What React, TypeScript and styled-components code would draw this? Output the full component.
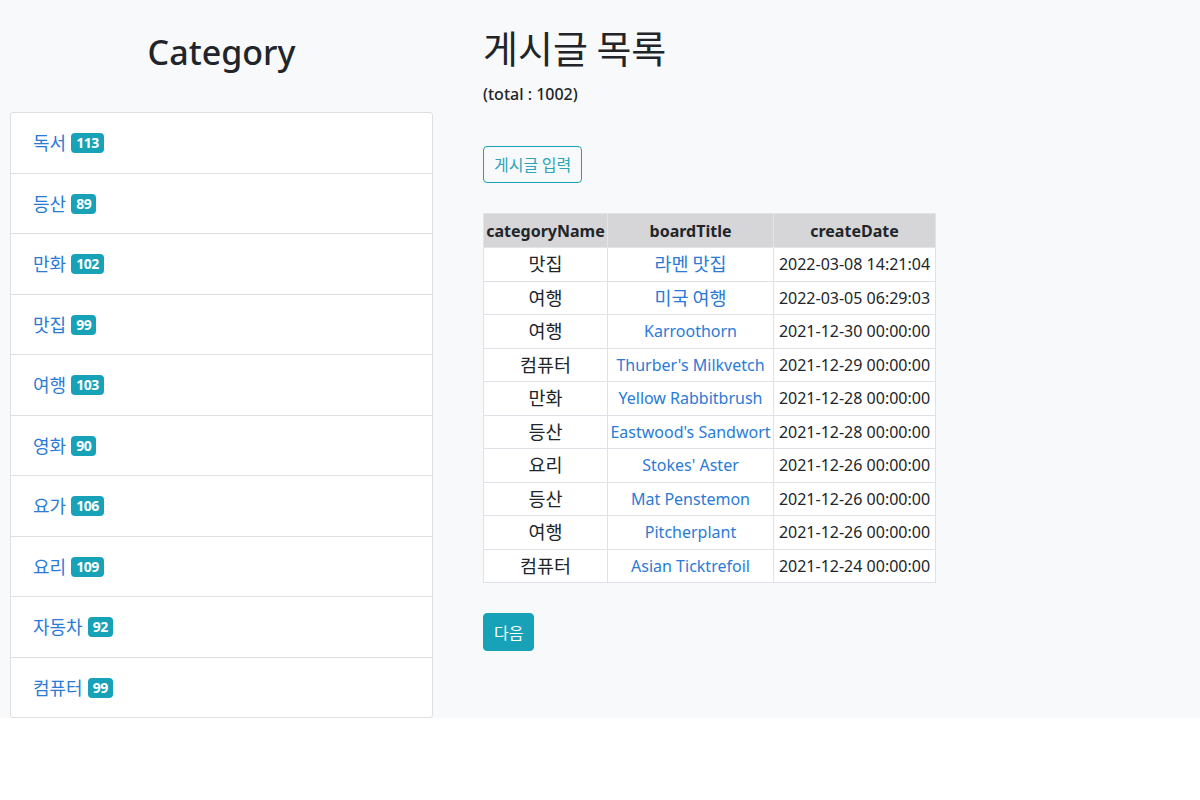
import React from "react";
import styled, { createGlobalStyle } from "styled-components";

const Global = createGlobalStyle`
  html, body { margin: 0; padding: 0; background: #ffffff; }
  body { font-family: "Noto Sans", "Noto Sans CJK KR", sans-serif; color: #212529; }
  * { box-sizing: border-box; }
`;

const Page = styled.div`
  background: #f8f9fa;
  display: flex;
  align-items: flex-start;
`;

const Side = styled.aside`
  width: 443px;
  padding: 0 10px;
  display: flex;
  flex-direction: column;
`;

const SideTitle = styled.h1`
  margin: 29px 0 37px;
  text-align: center;
  font-size: 34px;
  line-height: 46px;
  font-weight: 500;
  color: #212529;
`;

const List = styled.ul`
  list-style: none;
  margin: 0;
  padding: 0;
  background: #fff;
  border: 1px solid #dfdfdf;
  border-radius: 3px;
`;

const Item = styled.li`
  padding: 12px 22px;
  line-height: 35.5px;
  font-size: 18px;
  font-family: "Noto Sans CJK KR", "Noto Sans", sans-serif;
  & + & { border-top: 1px solid #dfdfdf; }
`;

const CatLink = styled.a`
  color: #2a7bd6;
  text-decoration: none;
`;

const Badge = styled.span`
  display: inline-block;
  margin-left: 5px;
  padding: 2px 5px;
  font-family: "Noto Sans", sans-serif;
  font-size: 14px;
  font-weight: 700;
  letter-spacing: -0.5px;
  line-height: 16px;
  color: #fff;
  background: #17a2b8;
  border-radius: 4px;
  vertical-align: 2px;
`;

const Main = styled.main`
  padding-left: 40px;
  display: flex;
  flex-direction: column;
  align-items: flex-start;
`;

const Title = styled.h1`
  margin: 21px 0 0;
  font-family: "Noto Sans CJK KR", sans-serif;
  font-size: 38px;
  line-height: 52px;
  font-weight: 400;
  color: #212529;
`;

const Total = styled.div`
  margin-top: 9px;
  font-size: 16px;
  line-height: 24px;
  font-weight: 500;
`;

const OutlineButton = styled.button`
  margin-top: 40px;
  padding: 6px 10px;
  font-family: "Noto Sans CJK KR", sans-serif;
  font-size: 16px;
  line-height: 23px;
  color: #2aa5b9;
  background: transparent;
  border: 1px solid #17a2b8;
  border-radius: 4px;
`;

const Table = styled.table`
  margin-top: 30px;
  border-collapse: collapse;
  table-layout: fixed;
  width: 452px;
  background: #fff;
  font-size: 16px;
`;

const HeadCell = styled.th<{ $w: number }>`
  width: ${(p) => p.$w}px;
  height: 34px;
  padding: 0 2px;
  background: #d6d6d8;
  font-weight: 700;
  text-align: center;
  border: 1px solid #e4e4e6;
  white-space: nowrap;
`;

const Cell = styled.td`
  height: 33.5px;
  padding: 0 1px;
  line-height: 24px;
  text-align: center;
  border: 1px solid #dee2e6;
  white-space: nowrap;
  overflow: hidden;
  font-family: "Noto Sans", "Noto Sans CJK KR", sans-serif;
  color: #212529;
`;

const Ko = styled.span`
  font-family: "Noto Sans CJK KR", sans-serif;
  font-size: 18.5px;
  line-height: 24px;
`;

const TitleLink = styled.a`
  color: #2a7bd6;
  text-decoration: none;
`;

const NextButton = styled.button`
  margin-top: 30px;
  padding: 7px 10px;
  font-family: "Noto Sans CJK KR", sans-serif;
  font-size: 16px;
  line-height: 22px;
  color: #fff;
  background: #17a2b8;
  border: 1px solid #17a2b8;
  border-radius: 4px;
`;

const categories: [string, number][] = [
  ["독서", 113],
  ["등산", 89],
  ["만화", 102],
  ["맛집", 99],
  ["여행", 103],
  ["영화", 90],
  ["요가", 106],
  ["요리", 109],
  ["자동차", 92],
  ["컴퓨터", 99],
];

const rows: [string, string, string][] = [
  ["맛집", "라멘 맛집", "2022-03-08 14:21:04"],
  ["여행", "미국 여행", "2022-03-05 06:29:03"],
  ["여행", "Karroothorn", "2021-12-30 00:00:00"],
  ["컴퓨터", "Thurber's Milkvetch", "2021-12-29 00:00:00"],
  ["만화", "Yellow Rabbitbrush", "2021-12-28 00:00:00"],
  ["등산", "Eastwood's Sandwort", "2021-12-28 00:00:00"],
  ["요리", "Stokes' Aster", "2021-12-26 00:00:00"],
  ["등산", "Mat Penstemon", "2021-12-26 00:00:00"],
  ["여행", "Pitcherplant", "2021-12-26 00:00:00"],
  ["컴퓨터", "Asian Ticktrefoil", "2021-12-24 00:00:00"],
];

const isKorean = (s: string) => /[가-힣]/.test(s);

const Text = ({ value }: { value: string }) =>
  isKorean(value) ? <Ko>{value}</Ko> : <>{value}</>;

export default function App() {
  return (
    <>
      <Global />
      <Page>
        <Side>
          <SideTitle>Category</SideTitle>
          <List>
            {categories.map(([name, count]) => (
              <Item key={name}>
                <CatLink href="#">{name}</CatLink>
                <Badge>{count}</Badge>
              </Item>
            ))}
          </List>
        </Side>
        <Main>
          <Title>게시글 목록</Title>
          <Total>(total : 1002)</Total>
          <OutlineButton>게시글 입력</OutlineButton>
          <Table>
            <thead>
              <tr>
                <HeadCell $w={124}>categoryName</HeadCell>
                <HeadCell $w={166}>boardTitle</HeadCell>
                <HeadCell $w={162}>createDate</HeadCell>
              </tr>
            </thead>
            <tbody>
              {rows.map(([c, t, d], i) => (
                <tr key={i}>
                  <Cell>
                    <Text value={c} />
                  </Cell>
                  <Cell>
                    <TitleLink href="#">
                      <Text value={t} />
                    </TitleLink>
                  </Cell>
                  <Cell>{d}</Cell>
                </tr>
              ))}
            </tbody>
          </Table>
          <NextButton>다음</NextButton>
        </Main>
      </Page>
    </>
  );
}
